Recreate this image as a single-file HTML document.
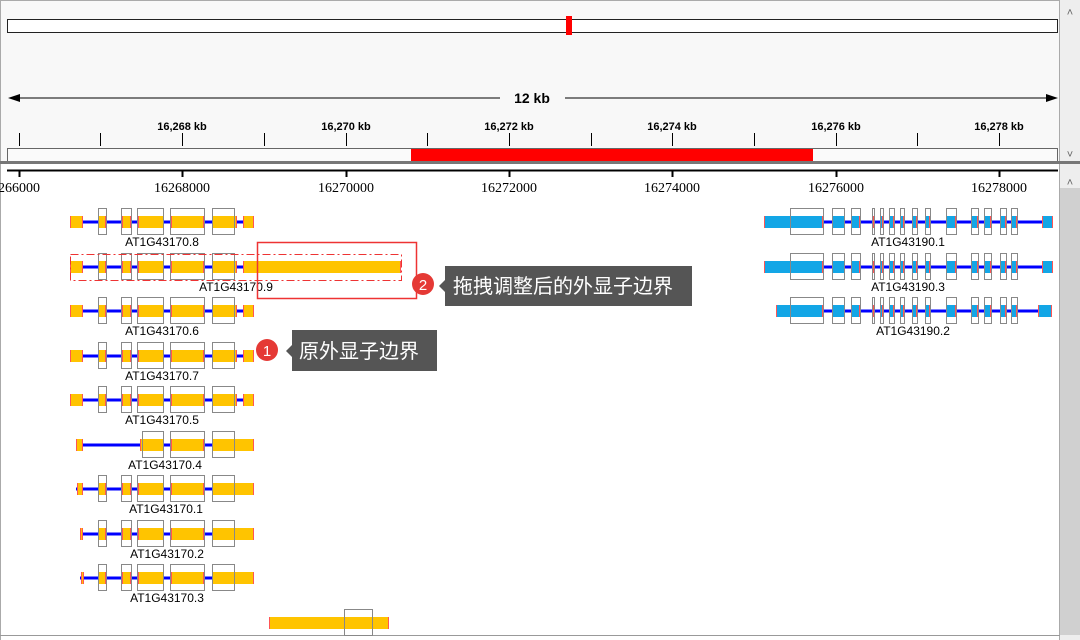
<!DOCTYPE html><html><head><meta charset="utf-8"><style>
body{margin:0;width:1080px;height:640px;overflow:hidden;background:#fff}
svg{display:block}
</style></head><body>
<svg id="s" width="1080" height="640" xmlns="http://www.w3.org/2000/svg" font-family="Liberation Sans, sans-serif">
<rect x="0" y="0" width="1060" height="162" fill="#f8f8f8"/>
<rect x="1060" y="0" width="20" height="640" fill="#eeeeee"/>
<rect x="1060" y="188" width="20" height="447" fill="#d0d0d0"/>
<line x1="0.5" y1="0" x2="0.5" y2="640" stroke="#aaa"/>
<line x1="1059.5" y1="0" x2="1059.5" y2="640" stroke="#aaa"/>
<line x1="0" y1="0.5" x2="1060" y2="0.5" stroke="#aaa"/>
<text x="1070" y="16" font-size="11" fill="#666" text-anchor="middle">˄</text>
<text x="1070" y="158" font-size="11" fill="#666" text-anchor="middle">˅</text>
<text x="1070" y="186" font-size="11" fill="#666" text-anchor="middle">˄</text>
<rect x="7.5" y="19.5" width="1050" height="13" fill="#fff" stroke="#222"/>
<rect x="566" y="16" width="6" height="19" fill="#f00"/>
<line x1="12" y1="98" x2="500" y2="98" stroke="#000"/>
<line x1="565" y1="98" x2="1050" y2="98" stroke="#000"/>
<polygon points="8,98 20,94 20,102" fill="#000"/>
<polygon points="1058,98 1046,94 1046,102" fill="#000"/>
<text x="532" y="103" font-size="14" font-weight="bold" text-anchor="middle">12 kb</text>
<rect x="7.5" y="148.5" width="1050" height="13" fill="#fafafa" stroke="#666"/>
<rect x="411" y="149" width="402" height="12" fill="#f00"/>
<rect x="0" y="161" width="1080" height="3" fill="#777"/>
<line x1="7" y1="170.5" x2="1058" y2="170.5" stroke="#000" stroke-width="2"/>
<line x1="0" y1="635.5" x2="1060" y2="635.5" stroke="#999"/>
<g id="g"></g>
<rect x="257.5" y="242.5" width="159" height="56" fill="none" stroke="#e33" stroke-width="1.5"/>
<rect x="70.5" y="254.5" width="331" height="26" fill="none" stroke="#e33" stroke-dasharray="8,3,2,3"/>
<rect x="445" y="266" width="247" height="40" fill="#555"/>
<polygon points="445,280 439,286 445,292" fill="#555"/>
<text x="453" y="293" font-size="20" fill="#fff" font-family="Liberation Sans, Noto Sans CJK SC, sans-serif">拖拽调整后的外显子边界</text>
<circle cx="423" cy="284" r="11" fill="#e53935"/>
<text x="423" y="290" font-size="15" fill="#fff" text-anchor="middle">2</text>
<rect x="292" y="330" width="145" height="41" fill="#555"/>
<polygon points="292,345 286,351 292,357" fill="#555"/>
<text x="299" y="358" font-size="20" fill="#fff" font-family="Liberation Sans, Noto Sans CJK SC, sans-serif">原外显子边界</text>
<circle cx="267" cy="350" r="11" fill="#e53935"/>
<text x="267" y="356" font-size="15" fill="#fff" text-anchor="middle">1</text>
</svg>
<script>
var o='';
var tk=[19,100,182,264,346,427,509,591,672,754,836,917,999];
tk.forEach(function(x){o+='<line x1="'+x+'.5" y1="133" x2="'+x+'.5" y2="146" stroke="#000"/>';});
for(var i=0;i<tk.length;i+=2){var x=tk[i];o+='<line x1="'+x+'.5" y1="171" x2="'+x+'.5" y2="177" stroke="#000" stroke-width="2"/>';
var v=16266+i;if(i>0)o+='<text x="'+x+'" y="130" font-size="11" font-weight="bold" text-anchor="middle">16,'+(v%1000)+' kb</text>';
o+='<text x="'+x+'" y="192" font-size="14" font-family="Liberation Serif, serif" text-anchor="middle">'+(i==0?'266000':v+'000')+'</text>';}
function gene(y,a,b,ex,bx,lab,lx,col){
 o+='<line x1="'+a+'" y1="'+y+'" x2="'+b+'" y2="'+y+'" stroke="#00f" stroke-width="3"/>';
 ex.forEach(function(e){o+='<rect x="'+e[0]+'" y="'+(y-6)+'" width="'+(e[1]-e[0])+'" height="12" fill="'+col+'"/>';
  o+='<rect x="'+e[0]+'" y="'+(y-6)+'" width="1" height="12" fill="#f55"/><rect x="'+(e[1]-1)+'" y="'+(y-6)+'" width="1" height="12" fill="#f55"/>';});
 bx.forEach(function(e){o+='<rect x="'+e[0]+'.5" y="'+(y-13.5)+'" width="'+(e[1]-e[0])+'" height="26" fill="none" stroke="#888"/>';});
 if(lab)o+='<text x="'+lx+'" y="'+(y+24)+'" font-size="12" text-anchor="middle">'+lab+'</text>';
}
var Y='#ffc400',B='#13a6e6';
var bxA=[[98,106],[121,131],[137,163],[170,204],[212,234]];
var exA=[[70,83],[98,106],[122,131],[138,164],[171,204],[212,237],[243,254]];
gene(222,70,254,exA,bxA,'AT1G43170.8',162,Y);
gene(267,70,401,[[70,83],[98,106],[122,131],[138,164],[171,204],[212,237],[243,401]],bxA,'AT1G43170.9',236,Y);
gene(311,70,254,exA,bxA,'AT1G43170.6',162,Y);
gene(356,70,254,exA,bxA,'AT1G43170.7',162,Y);
gene(400,70,254,exA,bxA,'AT1G43170.5',162,Y);
gene(445,76,254,[[76,83],[140,164],[171,204],[212,254]],[[142,163],[170,204],[212,234]],'AT1G43170.4',165,Y);
var exB=[[77,83],[98,106],[122,131],[138,164],[171,204],[212,254]];
gene(489,76,254,exB,bxA,'AT1G43170.1',166,Y);
gene(534,80,254,[[80,83],[98,106],[122,131],[138,164],[171,204],[212,254]],bxA,'AT1G43170.2',167,Y);
gene(578,80,254,[[81,84],[98,106],[122,131],[138,164],[171,204],[212,254]],bxA,'AT1G43170.3',167,Y);
gene(623,269,389,[[269,389]],[[344,372]],'',0,Y);
var bxC=[[790,823],[832,844],[851,860],[872,874],[880,883],[889,894],[900,904],[912,917],[925,930],[946,956],[971,978],[984,991],[1000,1006],[1011,1017]];
var exC=[[764,823],[832,845],[851,860],[872,874],[880,883],[889,894],[900,904],[912,917],[925,930],[946,956],[971,978],[984,991],[1000,1006],[1011,1017],[1042,1053]];
gene(222,764,1053,exC,bxC,'AT1G43190.1',908,B);
gene(267,764,1053,exC,bxC,'AT1G43190.3',908,B);
var exD=exC.slice();exD[0]=[776,823];exD[14]=[1038,1052];
gene(311,776,1052,exD,bxC,'AT1G43190.2',913,B);
document.getElementById('g').innerHTML=o;
</script>
</body></html>
